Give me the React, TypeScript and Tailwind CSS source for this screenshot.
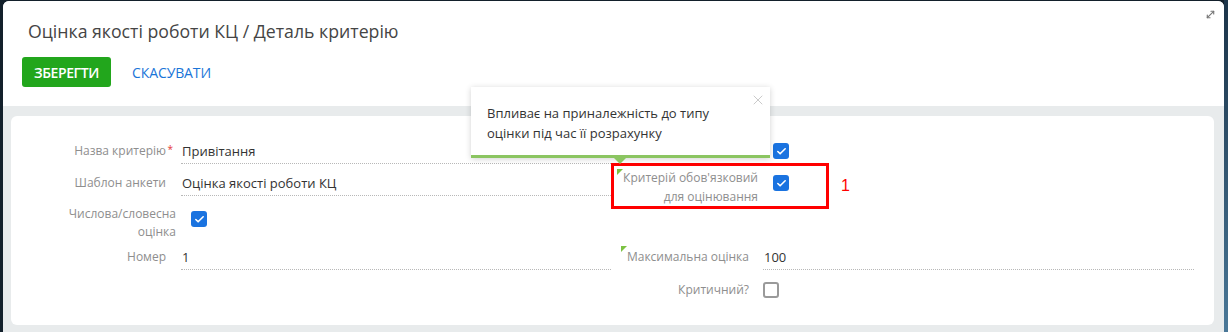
import { MoveDiagonal, X, Check } from 'lucide-react';

function Box({ checked }: { checked: boolean }) {
    if (!checked) {
        return <div className="w-4 h-4 rounded-[3px] border-2 border-[#9a9a9a] bg-white" />;
    }
    return (
        <div className="w-4 h-4 rounded-[3px] bg-[#1a73e0] flex items-center justify-center">
            <Check size={11} strokeWidth={3.5} className="text-white" />
        </div>
    );
}

function Corner() {
    return <span className="absolute -left-[6px] top-[1px] w-0 h-0 border-t-[6px] border-t-[#7cc242] border-r-[6px] border-r-transparent" />;
}

function TextRow({ label, value, required }: { label: string; value: string; required?: boolean }) {
    return (
        <div className="flex h-[25px] mb-[7px]">
            <div className="w-[165px] shrink-0 pr-[10px] text-right text-[12px] leading-[24px] text-[#8e8e8e] relative">
                {label}
                {required && <span className="absolute right-[3px] top-[-2px] text-[#e53935] text-[10px]">*</span>}
            </div>
            <div className="ml-[5px] flex-1 border-b border-dotted border-[#b8b8b8] pl-[1px] text-[13px] leading-[24px] text-[#333]">
                {value}
            </div>
        </div>
    );
}

export default function App() {
    return (
        <div className="w-[1228px] h-[332px] flex bg-[#13202b] overflow-hidden" style={{ fontFamily: '"Open Sans", "Noto Sans", sans-serif' }}>
            <div className="w-[3px] shrink-0" />
            <div className="relative mt-[1px] w-[1221px] shrink-0 rounded-t-[6px] bg-[#e8ebec] flex flex-col overflow-hidden">
                {/* Header */}
                <div className="h-[105px] bg-white shrink-0 pl-[19px] pt-[17px] relative">
                    <h1 className="text-[17.7px] leading-[26px] text-[#454545] pl-[6px]">Оцінка якості роботи КЦ / Деталь критерію</h1>
                    <div className="flex items-center mt-[13px]">
                        <button className="h-[30px] w-[89px] rounded-[3px] bg-[#22a61c] text-white text-[14px] font-semibold tracking-[-0.4px]">ЗБЕРЕГТИ</button>
                        <button className="ml-[21px] text-[#1a75d8] text-[14px] tracking-[-0.1px]">СКАСУВАТИ</button>
                    </div>
                    <MoveDiagonal size={11} strokeWidth={2.5} className="absolute right-[8px] top-[8px] text-[#777]" />
                </div>

                {/* Form card */}
                <div className="mt-[10px] ml-[8px] mr-[10px] h-[209px] bg-white rounded-[6px] flex relative">
                    {/* Left column */}
                    <div className="w-[600px] pt-[23px] flex flex-col">
                        <TextRow label="Назва критерію" value="Привітання" required />
                        <TextRow label="Шаблон анкети" value="Оцінка якості роботи КЦ" />
                        <div className="flex h-[35px] mb-[7px]">
                            <div className="w-[165px] shrink-0 pt-[2px] text-right text-[12px] leading-[18px] text-[#8e8e8e]">
                                Числова/словесна
                                <br />
                                оцінка
                            </div>
                            <div className="ml-[15px] pt-[8px]">
                                <Box checked />
                            </div>
                        </div>
                        <TextRow label="Номер" value="1" />
                    </div>

                    {/* Right column */}
                    <div className="flex-1 pt-[23px] pr-[20px] flex flex-col relative">
                        <div className="flex h-[25px] mb-[4px]">
                            <div className="w-[147px] shrink-0" />
                            <div className="ml-[15px] pt-[4px]">
                                <Box checked />
                            </div>
                        </div>
                        <div className="flex h-[39px] mb-[38px]">
                            <div className="w-[147px] shrink-0 text-right text-[12px] leading-[19px] text-[#8e8e8e] relative">
                                <span className="relative inline-block">
                                    <Corner />
                                    Критерій обов'язковий
                                </span>
                                <br />
                                для оцінювання
                            </div>
                            <div className="ml-[15px] pt-[7px]">
                                <Box checked />
                            </div>
                        </div>
                        <div className="flex h-[25px] mb-[7px]">
                            <div className="w-[138px] shrink-0 text-right text-[12px] leading-[24px] text-[#8e8e8e]">
                                <span className="relative inline-block">
                                    <Corner />
                                    Максимальна оцінка
                                </span>
                            </div>
                            <div className="ml-[14px] flex-1 border-b border-dotted border-[#b8b8b8] pl-[1px] text-[13px] leading-[24px] text-[#333]">100</div>
                        </div>
                        <div className="flex h-[25px] items-center">
                            <div className="w-[138px] shrink-0 text-right text-[12px] leading-[24px] text-[#8e8e8e]">Критичний?</div>
                            <div className="ml-[14px]">
                                <Box checked={false} />
                            </div>
                        </div>

                        {/* Annotation */}
                        <div className="absolute left-0 top-[47px] w-[218px] h-[46px] border-[3px] border-[#ff0000]" />
                        <span className="absolute left-[230px] top-[61px] text-[16px] leading-[18px] text-[#ff0000]" style={{ fontFamily: '"Liberation Sans", Arial, sans-serif' }}>1</span>
                    </div>
                </div>
                <div className="flex-1" />

                {/* Tooltip */}
                <div className="absolute left-[468px] top-[86px] w-[299px] h-[71px] bg-white shadow-[0_1px_6px_rgba(0,0,0,0.18)] border-b-[3px] border-[#8bc561] pl-[16px] pt-[16px] text-[13px] leading-[20px] text-[#333]">
                    Впливає на приналежність до типу
                    <br />
                    оцінки під час її розрахунку
                    <X size={16} strokeWidth={1.2} className="absolute right-[4px] top-[5px] text-[#bdbdbd]" />
                    <span className="absolute left-[143px] -bottom-[9px] w-0 h-0 border-l-[6px] border-l-transparent border-r-[6px] border-r-transparent border-t-[6px] border-t-[#8bc561]" />
                </div>
            </div>
            <div className="flex-1 bg-gradient-to-b from-[#1c3449] to-[#4a7898]" />
        </div>
    );
}
